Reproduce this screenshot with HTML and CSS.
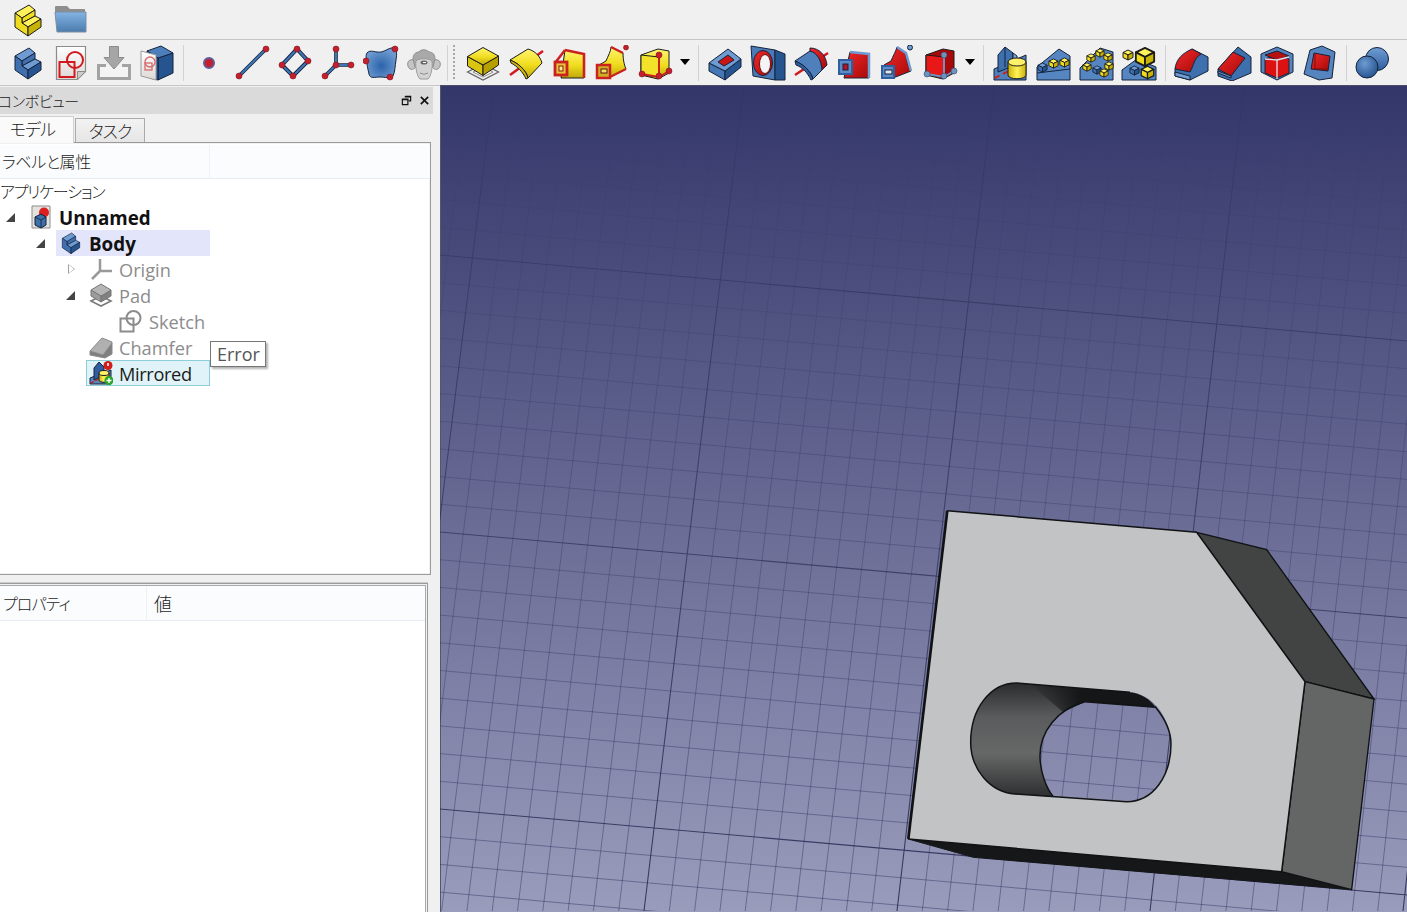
FILE: index.html
```html
<!DOCTYPE html>
<html lang="ja">
<head>
<meta charset="utf-8">
<title>FreeCAD</title>
<link rel="stylesheet" href="styles.css">
</head>
<body>
<svg class="sprite" xmlns="http://www.w3.org/2000/svg">
  <defs>
    <linearGradient id="gy" x1="0" y1="0" x2="0" y2="1"><stop offset="0" stop-color="#fff56e"/><stop offset=".55" stop-color="#f0dc1e"/><stop offset="1" stop-color="#bfa80a"/></linearGradient>
    <linearGradient id="gr" x1="0" y1="0" x2="1" y2="1"><stop offset="0" stop-color="#f02a2a"/><stop offset="1" stop-color="#a80808"/></linearGradient>
    <linearGradient id="gb" x1="0" y1="0" x2="0" y2="1"><stop offset="0" stop-color="#6f9dd3"/><stop offset="1" stop-color="#2f5f9e"/></linearGradient>
    <linearGradient id="gfold" x1="0" y1="0" x2="0" y2="1"><stop offset="0" stop-color="#84b4e4"/><stop offset="1" stop-color="#4c7cae"/></linearGradient>
    <radialGradient id="gface" cx=".5" cy=".6" r=".55"><stop offset="0" stop-color="#2b63aa"/><stop offset="1" stop-color="#6c9ad0"/></radialGradient>
    <radialGradient id="gball" cx=".4" cy=".35" r=".7"><stop offset="0" stop-color="#6d9bd2"/><stop offset="1" stop-color="#24508c"/></radialGradient>
    <linearGradient id="gpage" x1="0" y1="0" x2="0" y2="1"><stop offset="0" stop-color="#fff"/><stop offset="1" stop-color="#dcd8d4"/></linearGradient>
    <linearGradient id="gcyl" x1="0" y1="0" x2="1" y2="0"><stop offset="0" stop-color="#c9b206"/><stop offset=".5" stop-color="#fff25a"/><stop offset="1" stop-color="#c9b206"/></linearGradient>
    <linearGradient id="wall" x1="0" y1="0" x2="0" y2="1"><stop offset="0" stop-color="#2b2c2d"/><stop offset=".3" stop-color="#5a5b5c"/><stop offset=".62" stop-color="#666767"/><stop offset="1" stop-color="#2d2e2f"/></linearGradient>
    <linearGradient id="walltop" x1="0" y1="0" x2="1" y2="0"><stop offset="0" stop-color="#141618" stop-opacity="0"/><stop offset=".4" stop-color="#141618"/><stop offset="1" stop-color="#141618"/></linearGradient>
    <linearGradient id="gmin" gradientUnits="userSpaceOnUse" x1="0" y1="86" x2="0" y2="912"><stop offset="0" stop-color="#2a2d5c" stop-opacity="0"/><stop offset=".1" stop-color="#2a2d5c" stop-opacity=".08"/><stop offset=".4" stop-color="#2a2d5c" stop-opacity=".28"/><stop offset="1" stop-color="#2a2d5c" stop-opacity=".46"/></linearGradient>
    <linearGradient id="gmaj" gradientUnits="userSpaceOnUse" x1="0" y1="86" x2="0" y2="912"><stop offset="0" stop-color="#24264f" stop-opacity=".1"/><stop offset=".3" stop-color="#24264f" stop-opacity=".5"/><stop offset="1" stop-color="#24264f" stop-opacity=".85"/></linearGradient>

    <symbol id="step" viewBox="0 0 36 36">
      <path class="ft ol" d="M5 11 19 3l6 5-13 8z"/>
      <path class="ff ol" d="M12 16 25 8v6l-13 7z"/>
      <path class="ft ol" d="M12 21 25 14l6 3-13 8z"/>
      <path class="ff ol" d="M5 11l7 5v5l6 4v9L5 25z"/>
      <path class="fd ol" d="M18 25l13-8v8l-13 9z"/>
    </symbol>
    <symbol id="cube" viewBox="0 0 12 12">
      <path class="ft ol" d="M1 3.500 6 1l5 2.500L6 6z"/>
      <path class="ff ol" d="M1 3.500 6 6v5L1 8.500z"/>
      <path class="fd ol" d="M6 6l5-2.500v5L6 11z"/>
    </symbol>
    <symbol id="part-sketch" viewBox="0 0 36 36">
      <path d="M3.500 1.500h29v25l-8 8h-21z" fill="url(#gpage)" stroke="#8b8b8b" stroke-width="1.200"/>
      <path d="M32.500 26.500l-8 8v-8z" fill="#cfcac6" stroke="#8b8b8b"/>
      <rect x="6.500" y="17" width="15" height="15" fill="none" stroke="#d01a1f" stroke-width="2"/>
      <circle cx="22" cy="15" r="8" fill="none" stroke="#d01a1f" stroke-width="2"/>
    </symbol>
    <symbol id="import" viewBox="0 0 36 36">
      <path d="M10 20.500H2.500v13h31v-13H26" fill="#f4f4f4" stroke="#a3a3a3" stroke-width="3"/>
      <path d="M13.500 1.500h9v11H28L18 24 8 12.500h5.500z" fill="#a6a6a6" stroke="#8c8c8c"/>
    </symbol>
    <symbol id="sketch-cube" viewBox="0 0 36 36">
      <path d="M19 13 34 8v20l-15 7z" fill="#25548f" stroke="#14233c"/>
      <path d="M8 6 22 1l12 7-15 5z" fill="#4d7fbc" stroke="#14233c"/>
      <path d="M8 6l11 7v22l-8-2z" fill="#2f5f9e" stroke="#14233c"/>
      <path d="M2 6l15 4v25L2 31z" fill="url(#gpage)" stroke="#9a9a9a"/>
      <rect x="6" y="18" width="7" height="7" fill="none" stroke="#d9686a" stroke-width="1.300"/>
      <circle cx="11" cy="17" r="5" fill="none" stroke="#d9686a" stroke-width="1.300"/>
    </symbol>
    <symbol id="point" viewBox="0 0 36 36"><circle cx="18" cy="18" r="5" fill="#c51f2d" stroke="#5d5d99" stroke-width="2"/></symbol>
    <symbol id="line" viewBox="0 0 36 36">
      <path d="M5 31 32 4" stroke="#14233c" stroke-width="3.600"/>
      <path d="M5 31 32 4" stroke="#3f75b5" stroke-width="2"/>
      <circle cx="5" cy="31" r="3" class="rd"/><circle cx="32" cy="4" r="3" class="rd"/>
    </symbol>
    <symbol id="rectdatum" viewBox="0 0 36 36">
      <path d="M20 4 31 16 16 31 5 20z" fill="none" stroke="#14233c" stroke-width="4"/>
      <path d="M20 4 31 16 16 31 5 20z" fill="none" stroke="#3f75b5" stroke-width="2.200"/>
      <circle cx="20" cy="4" r="3" class="rd"/><circle cx="31" cy="16" r="3" class="rd"/><circle cx="16" cy="31" r="3" class="rd"/><circle cx="5" cy="20" r="3" class="rd"/>
    </symbol>
    <symbol id="axes" viewBox="0 0 36 36">
      <path d="M16 4v16h16M16 20 5 31" fill="none" stroke="#14233c" stroke-width="3.600"/>
      <path d="M16 4v16h16M16 20 5 31" fill="none" stroke="#3f75b5" stroke-width="2"/>
      <circle cx="16" cy="4" r="3" class="rd"/><circle cx="16" cy="20" r="3" class="rd"/><circle cx="31" cy="20" r="3" class="rd"/><circle cx="5" cy="31" r="3" class="rd"/>
    </symbol>
    <symbol id="face" viewBox="0 0 36 36">
      <path d="M4 8c3-4 9 0 14-1 5-1 9-5 13-4 3 1 3 6 2 12-1 6-1 12-3 16-3 3-8 1-13 1-5 0-10 2-11-3-1-5-2-8-2-11 0-3-2-7 0-10z" fill="url(#gface)" stroke="#14233c"/>
      <circle cx="32" cy="4" r="3" class="rd"/><circle cx="3" cy="16" r="3" class="rd"/><circle cx="27" cy="32" r="3" class="rd"/>
    </symbol>
    <symbol id="sheep" viewBox="0 0 36 36">
      <path d="M8 15C1 13 0 21 4 24c2 1 5 0 6-3zM28 15c7-2 8 6 4 9-2 1-5 0-6-3z" fill="#c4c4c4" stroke="#8f8f8f"/>
      <path d="M7 14c0-5 3-7 6-7 2-3 7-3 10 0 4 0 6 3 6 7l-2 8H9z" fill="#a9a9a9" stroke="#8f8f8f"/>
      <path d="M10 16c2-3 14-3 16 0 1 6-1 15-4 18h-8c-3-3-5-12-4-18z" fill="#d3d3d3" stroke="#9a9a9a"/>
      <ellipse cx="18" cy="17.500" rx="3.500" ry="2" fill="#6a6a6a"/>
      <path d="M17 17.500h3" stroke="#fff" stroke-width="1"/>
      <path d="M14 28q4 2.500 8 0" fill="none" stroke="#8c8c8c"/>
    </symbol>
    <symbol id="pad" viewBox="0 0 36 36">
      <path d="M2.500 27 18 19l15.500 8L18 35z" fill="#eee" stroke="#666" stroke-width="1.300"/>
      <path d="M8 27l10-5 10 5-10 5z" fill="#fff" stroke="#8a8a8a"/>
      <path d="M2.500 11.500V21L18 30.500V20z" fill="#d9c40f" stroke="#1c1c1c"/>
      <path d="M33.500 11v9L18 30.500V20z" fill="#b79f00" stroke="#1c1c1c"/>
      <path d="M2.500 11.500 18 2.500 33.500 11 18 20z" fill="url(#gy)" stroke="#1c1c1c"/>
    </symbol>
    <symbol id="revolve" viewBox="0 0 36 36">
      <path d="M2 30 35 6" stroke="#d01a1f" stroke-width="2.500"/>
      <path d="M2 15 20 4C27 6 32 11 34 18L20 33C18 25 10 18 2 15z" fill="url(#gy)" stroke="#1c1c1c"/>
      <path d="M2 15C10 18 18 25 20 33L18 34C15 27 9 21 3 18z" fill="#cdb70a" stroke="#1c1c1c"/>
    </symbol>
    <symbol id="loft" viewBox="0 0 36 36">
      <path d="M14 5 33 9v24H10z" fill="url(#gy)" stroke="#1c1c1c"/>
      <path d="M14 5 33 9v24" fill="none" stroke="#c9221f" stroke-width="2.600"/>
      <path d="M4 18 14 5" stroke="#c9221f" stroke-width="2.500"/>
      <rect x="4" y="17" width="12" height="13" fill="#e8c33a" stroke="#c9221f" stroke-width="2.800"/>
      <rect x="8" y="21" width="4" height="5" fill="#f7ee8a" stroke="#8c1a12"/>
    </symbol>
    <symbol id="pipe" viewBox="0 0 36 36">
      <path d="M12 16C14 11 17 6 17 2l12 6c0 8 2 14 3 16L14 33H5V20z" fill="url(#gy)" stroke="#1c1c1c"/>
      <path d="M17 2l12 6" stroke="#c9221f" stroke-width="2.500"/>
      <path d="M14 33 32 24" stroke="#c9221f" stroke-width="2"/>
      <circle cx="32" cy="2.500" r="2.500" class="rd"/>
      <rect x="3" y="20" width="13" height="13" fill="#cfae24" stroke="#c9221f" stroke-width="2.500"/>
      <rect x="7" y="24" width="6" height="4" fill="#f0e26a" stroke="#611"/>
    </symbol>
    <symbol id="prim-y" viewBox="0 0 36 36">
      <path d="M4 10 21 4l11 2v22l-11 6-17-4z" fill="url(#gy)" stroke="#1c1c1c"/>
      <path d="M4 10 22 12v20L4 30z" fill="#f3e22a" stroke="#1c1c1c"/>
      <path d="M22 12v20M5 29l17 3 10-6" fill="none" stroke="#c9221f" stroke-width="2"/>
      <circle cx="22" cy="10" r="3" class="rd"/><circle cx="22" cy="31" r="3" class="rd"/><circle cx="5" cy="29" r="3" class="rd"/><circle cx="32" cy="26" r="3" class="rd"/>
    </symbol>
    <symbol id="pocket" viewBox="0 0 36 36">
      <path d="M2 18v8l16 9V26z" fill="#4577b4" stroke="#14233c"/>
      <path d="M34 14v8L18 35V26z" fill="#25548f" stroke="#14233c"/>
      <path d="M2 18 21 4l13 10L18 26z" fill="#6e9bd1" stroke="#14233c"/>
      <path d="M11 17 21 10l6 5-10 6z" fill="#cc1414" stroke="#14233c"/>
    </symbol>
    <symbol id="hole" viewBox="0 0 36 36">
      <path d="M1 1l24 4v30L3 31z" fill="#4a7bb7" stroke="#14233c"/>
      <path d="M25 5l10 4v26H25z" fill="#25548f" stroke="#14233c"/>
      <ellipse cx="13" cy="18" rx="9.500" ry="12.500" fill="url(#gr)" stroke="#14233c"/>
      <ellipse cx="15" cy="19" rx="5.500" ry="9.500" fill="#f4f4f4" stroke="#6e1010"/>
    </symbol>
    <symbol id="groove" viewBox="0 0 36 36">
      <path d="M2 30 35 8" stroke="#d01a1f" stroke-width="2.500"/>
      <path d="M17 3C26 3 33 10 34 20L29 25C28 15 24 9 17 7z" fill="url(#gr)" stroke="#14233c"/>
      <path d="M2 16 17 6C24 8 28 14 29 25L20 34C18 26 10 19 2 16z" fill="#4f80bc" stroke="#14233c"/>
      <path d="M2 16C10 19 18 26 20 34L18 35C15 28 9 22 3 20z" fill="#2f5f9e" stroke="#14233c"/>
    </symbol>
    <symbol id="subloft" viewBox="0 0 36 36">
      <path d="M14 7 33 9v24H8z" fill="url(#gr)" stroke="#14233c"/>
      <path d="M14 7 33 9v24" fill="none" stroke="#6e9bd1" stroke-width="2.500"/>
      <rect x="3" y="15" width="13" height="14" fill="#5e8cc6" stroke="#2f5f9e" stroke-width="2"/>
      <rect x="7" y="19" width="5" height="6" fill="#b6132a" stroke="#14233c"/>
    </symbol>
    <symbol id="subpipe" viewBox="0 0 36 36">
      <path d="M12 16C14 11 17 6 18 2l9 6c0 8 3 14 5 18L14 33H5V20z" fill="url(#gr)" stroke="#14233c"/>
      <path d="M18 2l9 6 5 18" fill="none" stroke="#6e9bd1" stroke-width="2.500"/>
      <circle cx="31" cy="2.500" r="2.500" fill="#6e9bd1" stroke="#14233c"/>
      <rect x="3" y="21" width="12" height="12" fill="#5e8cc6" stroke="#2f5f9e" stroke-width="2"/>
      <rect x="6" y="25" width="7" height="4" fill="#dfe9f4" stroke="#14233c"/>
    </symbol>
    <symbol id="prim-r" viewBox="0 0 36 36">
      <path d="M4 10 21 4l11 2v22l-11 6-17-4z" fill="#a80808" stroke="#1c1c1c"/>
      <path d="M4 10 22 12v20L4 30z" fill="#e81818" stroke="#1c1c1c"/>
      <path d="M22 12v20M5 29l17 3 10-6" fill="none" stroke="#6e92bd" stroke-width="2"/>
      <circle cx="22" cy="10" r="3" class="bd"/><circle cx="22" cy="31" r="3" class="bd"/><circle cx="5" cy="29" r="3" class="bd"/><circle cx="32" cy="26" r="3" class="bd"/>
    </symbol>
    <symbol id="mirror" viewBox="0 0 36 36">
      <path d="M2 24 34 10v25H2z" fill="#4f80bc" stroke="#14233c"/>
      <path d="M6 10 13 2l8 6v13L6 27z" fill="#3e70ad" stroke="#14233c"/>
      <path d="M13 2v20" stroke="#14233c"/>
      <path d="M21 8l4 3v6l-4 3z" fill="#7ba6d8" stroke="#14233c"/>
      <path d="M3 33 34 17" stroke="#c9221f" stroke-width="2" stroke-dasharray="5 4"/>
      <path d="M16 17v13c0 5 18 5 18 0V17z" fill="url(#gcyl)" stroke="#1c1c1c"/>
      <ellipse cx="25" cy="17" rx="9" ry="4" fill="#fff26a" stroke="#1c1c1c"/>
    </symbol>
    <symbol id="linear" viewBox="0 0 36 36">
      <path d="M2 22 24 4l11 7v24H2z" fill="#5686c1" stroke="#14233c"/>
      <path d="M2 28 35 24" stroke="#14233c"/>
      <use href="#cube" class="blue" x="2" y="17" width="11" height="11"/>
      <use href="#cube" class="yellow" x="13" y="13" width="11" height="11"/>
      <use href="#cube" class="yellow" x="24" y="12" width="11" height="11"/>
    </symbol>
    <symbol id="polar" viewBox="0 0 36 36">
      <path d="M2 23 22 3l13 4v28H2z" fill="#5686c1" stroke="#14233c"/>
      <use href="#cube" class="yellow" x="17" y="3" width="10" height="10"/>
      <use href="#cube" class="yellow" x="25" y="7" width="10" height="10"/>
      <use href="#cube" class="yellow" x="26" y="16" width="10" height="10"/>
      <use href="#cube" class="yellow" x="8" y="8" width="10" height="10"/>
      <use href="#cube" class="yellow" x="4" y="17" width="10" height="10"/>
      <use href="#cube" class="blue" x="14" y="20" width="10" height="10"/>
      <use href="#cube" class="yellow" x="21" y="23" width="10" height="10"/>
    </symbol>
    <symbol id="multi" viewBox="0 0 36 36">
      <path d="M1 25 16 14l19 8v13H1z" fill="#5686c1" stroke="#14233c"/>
      <use href="#cube" class="yellow" x="1" y="4" width="12" height="12"/>
      <use href="#cube" class="yellow" x="13" y="1" width="22" height="22"/>
      <use href="#cube" class="blue" x="8" y="20" width="11" height="11"/>
      <use href="#cube" class="yellow" x="19" y="20" width="15" height="15"/>
    </symbol>
    <symbol id="fillet" viewBox="0 0 36 36">
      <path d="M2 24v7l15 4 18-9V12L19 4z" fill="#3e70ad" stroke="#14233c"/>
      <path d="M2 27l15 4v4L2 31z" fill="#6e9bd1" stroke="#14233c"/>
      <path d="M2 24C3 14 10 8 19 4L28 9C21 13 21 20 17 27z" fill="url(#gr)" stroke="#14233c"/>
    </symbol>
    <symbol id="chamfer" viewBox="0 0 36 36">
      <path d="M2 24v7l14 5 19-8V12L22 2z" fill="#3e70ad" stroke="#14233c"/>
      <path d="M2 24 17 7l12 6-14 18z" fill="url(#gr)" stroke="#14233c"/>
      <path d="M2 28l13 5v-2L2 26z" fill="#6e9bd1" stroke="#14233c"/>
    </symbol>
    <symbol id="draft" viewBox="0 0 36 36">
      <path d="M2 9 18 2l16 7v18l-16 8-16-8z" fill="#5584bf" stroke="#14233c"/>
      <path d="M6 14 18 10l12 4v14l-12 5-12-5z" fill="#dc1212" stroke="#14233c"/>
      <path d="M6 10 18 6l12 5-12 4z" fill="#b81010" stroke="#14233c"/>
      <path d="M18 15v19M6 14l12 1 12-3" fill="none" stroke="#dfe6ee" stroke-width="1.300"/>
    </symbol>
    <symbol id="thickness" viewBox="0 0 36 36">
      <path d="M8 5 20 1l13 6-3 26-13 2-15-6z" fill="#5584bf" stroke="#14233c"/>
      <path d="M12 8 28 11l-2 15-17-2z" fill="url(#gr)" stroke="#14233c"/>
      <path d="M13 9v15h13" fill="none" stroke="#7d0d0d"/>
    </symbol>
    <symbol id="boolean" viewBox="0 0 36 36">
      <circle cx="23" cy="14" r="11.500" fill="url(#gb)" stroke="#14233c"/>
      <circle cx="13" cy="22" r="11" fill="url(#gball)" stroke="#14233c"/>
    </symbol>
    <symbol id="doc" viewBox="0 0 24 24">
      <path d="M3 1h18v22H3z" fill="#e4e2df" stroke="#8d8d8d"/>
      <circle cx="15" cy="7.500" r="5" fill="#dc1f1f"/>
      <path d="M6 12 12 9l5 3v8l-5 3-6-3z" fill="#3d6fa8" stroke="#14233c"/>
      <path d="M6 12l6 3 5-3M12 15v8" fill="none" stroke="#14233c" stroke-width=".8"/>
    </symbol>
    <symbol id="t-origin" viewBox="0 0 24 24">
      <path d="M11 2v12h12M11 14 3 22" fill="none" stroke="#999" stroke-width="2.500"/>
    </symbol>
    <symbol id="t-pad" viewBox="0 0 24 24">
      <path d="M2 18l10-5 10 5-10 5z" fill="#fff" stroke="#7a7a7a" stroke-width="1.600"/>
      <path d="M2 7v6l10 6V13z" fill="#9c9c9c" stroke="#777"/>
      <path d="M22 7v6l-10 6V13z" fill="#808080" stroke="#777"/>
      <path d="M2 7 12 1l10 6-10 6z" fill="#b5b5b5" stroke="#777"/>
    </symbol>
    <symbol id="t-sketch" viewBox="0 0 24 24">
      <rect x="1.500" y="9.500" width="13" height="13" fill="none" stroke="#8c8c8c" stroke-width="2"/>
      <circle cx="14.500" cy="9" r="7" fill="none" stroke="#8c8c8c" stroke-width="2"/>
    </symbol>
    <symbol id="t-chamfer" viewBox="0 0 24 24">
      <path d="M1 16v4l15 3 7-4V8z" fill="#7f7f7f" stroke="#8a8a8a"/>
      <path d="M1 16 13 3l10 4v1L14 20z" fill="#b0b0b0" stroke="#8a8a8a"/>
    </symbol>
    <symbol id="t-mirror" viewBox="0 0 24 24">
      <path d="M1 17 22 9v14H1z" fill="#5a84b8" stroke="#14233c"/>
      <path d="M5 7l5-6 5 5v8l-10 5z" fill="#2f5f9e" stroke="#14233c"/>
      <path d="M2 22 20 12" stroke="#c9221f" stroke-width="1.500" stroke-dasharray="3 2"/>
      <path d="M10 12v7c0 3 10 3 10 0v-7z" fill="url(#gcyl)" stroke="#1c1c1c"/>
      <ellipse cx="15" cy="12" rx="5" ry="2.500" fill="#fff26a" stroke="#1c1c1c"/>
      <circle cx="19" cy="4.500" r="4.500" fill="#d21c1c"/>
      <path d="M19 2v3" stroke="#fff" stroke-width="1.600"/>
      <circle cx="20" cy="19.500" r="4.500" fill="#2aa52a"/>
      <path d="M20 17v5M17.500 19.500h5" stroke="#fff" stroke-width="1.400"/>
    </symbol>
  </defs>
</svg>

<header class="bar bar-top">
  <button class="tool"><svg class="ic yellow"><use href="#step"/></svg></button>
  <button class="tool">
    <svg class="ic" viewBox="0 0 36 36">
      <path d="M2 5a1 1 0 0 1 1-1h11l3 3h15v5H2z" fill="#8e8e8e"/>
      <path d="M2 10h31v20H4z" fill="url(#gfold)" stroke="#7b8ea3"/>
    </svg>
  </button>
</header>

<nav class="bar bar-main">
  <button class="tool"><svg class="ic blue"><use href="#step"/></svg></button>
  <button class="tool"><svg class="ic"><use href="#part-sketch"/></svg></button>
  <button class="tool"><svg class="ic"><use href="#import"/></svg></button>
  <button class="tool"><svg class="ic"><use href="#sketch-cube"/></svg></button>
  <span class="sep"></span>
  <button class="tool"><svg class="ic"><use href="#point"/></svg></button>
  <button class="tool"><svg class="ic"><use href="#line"/></svg></button>
  <button class="tool"><svg class="ic"><use href="#rectdatum"/></svg></button>
  <button class="tool"><svg class="ic"><use href="#axes"/></svg></button>
  <button class="tool"><svg class="ic"><use href="#face"/></svg></button>
  <button class="tool"><svg class="ic"><use href="#sheep"/></svg></button>
  <span class="break"><i class="sepline"></i><i class="grip"></i></span>
  <button class="tool"><svg class="ic"><use href="#pad"/></svg></button>
  <button class="tool"><svg class="ic"><use href="#revolve"/></svg></button>
  <button class="tool"><svg class="ic"><use href="#loft"/></svg></button>
  <button class="tool"><svg class="ic"><use href="#pipe"/></svg></button>
  <button class="tool"><svg class="ic"><use href="#prim-y"/></svg></button>
  <span class="drop"></span>
  <span class="sep sep-wide"></span>
  <button class="tool"><svg class="ic"><use href="#pocket"/></svg></button>
  <button class="tool"><svg class="ic"><use href="#hole"/></svg></button>
  <button class="tool"><svg class="ic"><use href="#groove"/></svg></button>
  <button class="tool"><svg class="ic"><use href="#subloft"/></svg></button>
  <button class="tool"><svg class="ic"><use href="#subpipe"/></svg></button>
  <button class="tool"><svg class="ic"><use href="#prim-r"/></svg></button>
  <span class="drop"></span>
  <span class="sep sep-wide"></span>
  <button class="tool"><svg class="ic"><use href="#mirror"/></svg></button>
  <button class="tool"><svg class="ic"><use href="#linear"/></svg></button>
  <button class="tool"><svg class="ic"><use href="#polar"/></svg></button>
  <button class="tool"><svg class="ic"><use href="#multi"/></svg></button>
  <span class="sep"></span>
  <button class="tool"><svg class="ic"><use href="#fillet"/></svg></button>
  <button class="tool"><svg class="ic"><use href="#chamfer"/></svg></button>
  <button class="tool"><svg class="ic"><use href="#draft"/></svg></button>
  <button class="tool"><svg class="ic"><use href="#thickness"/></svg></button>
  <span class="sep"></span>
  <button class="tool"><svg class="ic"><use href="#boolean"/></svg></button>
</nav>

<main class="work">
  <aside class="dock">
    <div class="dock-title">
      <span class="jp dock-label">コンボビュー</span>
      <svg class="dock-btn" viewBox="0 0 12 12"><path d="M4.500 1.500h6v5h-2M1.500 4.500h6v6h-6z" fill="none" stroke="#111" stroke-width="1.300"/><path d="M4 2h7M1 5h7" stroke="#111" stroke-width="1.400"/></svg>
      <svg class="dock-btn" viewBox="0 0 12 12"><path d="M2 2l8 8M10 2l-8 8" stroke="#111" stroke-width="1.800"/></svg>
    </div>
    <div class="tabs">
      <span class="tab tab-on jp">モデル</span>
      <span class="tab jp">タスク</span>
    </div>
    <section class="frame frame-tree">
      <div class="hdr hdr-tree"><span class="jp hdr-a">ラベルと属性</span><span class="hdr-b"></span></div>
      <div class="jp tree-root">アプリケーション</div>
      <div class="row l0"><i class="caret open"></i><span class="item bold"><svg class="tic"><use href="#doc"/></svg>Unnamed</span></div>
      <div class="row l1"><i class="caret open"></i><span class="item bold hi"><svg class="tic" viewBox="0 0 36 36"><use href="#step" class="blue"/></svg>Body</span></div>
      <div class="row l2"><i class="caret closed"></i><span class="item dim"><svg class="tic"><use href="#t-origin"/></svg>Origin</span></div>
      <div class="row l2"><i class="caret open"></i><span class="item dim"><svg class="tic"><use href="#t-pad"/></svg>Pad</span></div>
      <div class="row l3"><i class="caret none"></i><span class="item dim"><svg class="tic"><use href="#t-sketch"/></svg>Sketch</span></div>
      <div class="row l2"><i class="caret none"></i><span class="item dim"><svg class="tic"><use href="#t-chamfer"/></svg>Chamfer</span></div>
      <div class="row l2"><i class="caret none"></i><span class="item sel"><svg class="tic"><use href="#t-mirror"/></svg>Mirrored</span></div>
      <div class="tooltip">Error</div>
    </section>
    <section class="frame frame-prop">
      <div class="hdr hdr-prop"><span class="jp hdr-p">プロパティ</span><span class="jp hdr-v">値</span></div>
    </section>
  </aside>

  <div class="view">
    <svg class="scene" viewBox="440 86 967 826" xmlns="http://www.w3.org/2000/svg">
      <path class="grid-min" d="M444 86 340.4 912M469 86 365.700 912M519 86 416.300 912M544 86 441.600 912M569 86 466.900 912M594 86 492.200 912M619 86 517.500 912M644 86 542.800 912M669 86 568.100 912M694 86 593.400 912M719 86 618.700 912M769 86 669.300 912M794 86 694.600 912M819 86 719.900 912M844 86 745.200 912M869 86 770.500 912M894 86 795.800 912M919 86 821.100 912M944 86 846.400 912M969 86 871.700 912M1019 86 922.300 912M1044 86 947.600 912M1069 86 972.900 912M1094 86 998.200 912M1119 86 1023.500 912M1144 86 1048.800 912M1169 86 1074.100 912M1194 86 1099.400 912M1219 86 1124.700 912M1269 86 1175.300 912M1294 86 1200.600 912M1319 86 1225.900 912M1344 86 1251.200 912M1369 86 1276.500 912M1394 86 1301.800 912M1419 86 1327.100 912M1444 86 1352.400 912M1469 86 1377.700 912"/>
      <path class="grid-min" d="M440 6.700l967 86M440 34.400l967 86M440 62.100l967 86M440 89.800l967 86M440 117.500l967 86M440 145.200l967 86M440 172.900l967 86M440 200.600l967 86M440 228.300l967 86M440 283.700l967 86M440 311.400l967 86M440 339.100l967 86M440 366.800l967 86M440 394.500l967 86M440 422.200l967 86M440 449.900l967 86M440 477.600l967 86M440 505.300l967 86M440 560.700l967 86M440 588.400l967 86M440 616.100l967 86M440 643.800l967 86M440 671.500l967 86M440 699.200l967 86M440 726.900l967 86M440 754.600l967 86M440 782.300l967 86M440 837.700l967 86M440 865.400l967 86M440 893.100l967 86"/>
      <path class="grid-maj" d="M494 86 391 912M744 86 644 912M994 86 897 912M1244 86 1150 912M1494 86 1403 912M440 256l967 86M440 533l967 86M440 810l967 86"/>
      <g transform="translate(890 500) scale(.33333)">
        <path d="M55 1020 1175 1118 1385 1172 250 1075z" fill="#151719" stroke="#151719" stroke-width="3"/>
        <path d="M920 100 1130 152 1452 600 1245 548z" fill="#424444" stroke="#101214" stroke-width="4"/>
        <path d="M1245 548 1452 600 1385 1172 1175 1118z" fill="#646665" stroke="#101214" stroke-width="4"/>
        <path d="M172 35 920 100 1245 548 1175 1118 55 1020zM380 552 720 580C790 585 843 660 843 735 843 830 790 908 710 908L375 885C300 880 242 810 242 730 242 630 300 552 380 552z" fill="#c2c3c4" fill-rule="evenodd"/>
        <path d="M380 552 585 570V608C500 630 450 700 450 770 450 820 470 870 490 893L375 885C300 880 242 810 242 730 242 630 300 552 380 552z" fill="url(#wall)"/>
        <path d="M420 556 720 580C750 583 780 600 797 625L585 608 520 640z" fill="url(#walltop)"/>
        <path d="M585 608C500 630 450 700 450 770 450 820 470 870 490 893" fill="none" stroke="#111315" stroke-width="4.500"/>
        <path d="M585 608 797 625C825 660 843 700 843 735 843 830 790 908 710 908L375 885C300 880 242 810 242 730 242 630 300 552 380 552L720 580" fill="none" stroke="#111315" stroke-width="4.500"/>
        <path d="M172 35 920 100M920 100 1245 548 1175 1118 55 1020" fill="none" stroke="#101214" stroke-width="4.500"/>
        <path d="M172 35 55 1020" fill="none" stroke="#101214" stroke-width="8"/>
      </g>
    </svg>
  </div>
</main>
</body>
</html>
```
FILE: styles.css
```css
* { box-sizing: border-box; }
html, body { margin: 0; height: 100%; }
body {
  width: 1407px;
  height: 912px;
  overflow: hidden;
  background: #f0f0f0;
  color: #1c1c1c;
  font-family: "Open Sans", "Noto Sans", sans-serif;
  font-size: 18px;
  display: flex;
  flex-direction: column;
}
.sprite { display: block; width: 0; height: 0; overflow: hidden; }
.blue { --t: #6e9bd1; --f: #3f70ad; --d: #25548f; --s: #14233c; }
.yellow { --t: #fff25a; --f: #f0dc1e; --d: #c9b206; --s: #1c1c1c; }
.ft { fill: var(--t); }
.ff { fill: var(--f); }
.fd { fill: var(--d); }
.ol { stroke: var(--s); stroke-width: 1; stroke-linejoin: round; }
.rd { fill: #c51f2d; stroke: #7c1620; stroke-width: .6; }
.bd { fill: #6e92bd; stroke: #2c4a70; stroke-width: .6; }

.bar { display: flex; align-items: center; flex: none; background: #f0f0f0; border-bottom: 1px solid #c6c6c6; }
.bar-top { height: 40px; padding-left: 6.500px; }
.bar-main { height: 46px; padding-left: 6.500px; }
.tool { flex: none; width: 43px; height: 38px; padding: 0; border: 0; background: none; display: flex; align-items: center; justify-content: center; }
.ic { width: 36px; height: 36px; display: block; }
.sep { flex: none; width: 9px; height: 36px; display: flex; justify-content: center; }
.sep::before { content: ""; width: 1px; background: #d2d2d2; }
.sep-wide { width: 11px; }
.break { flex: none; width: 16px; height: 36px; display: flex; padding-left: 1px; gap: 5px; }
.sepline { width: 1px; background: #d2d2d2; }
.grip { width: 2px; background: repeating-linear-gradient(#a8a8a8 0 2px, transparent 2px 4px); }
.drop { flex: none; width: 16px; height: 7px; position: relative; display: flex; justify-content: center; }
.drop::before { content: ""; width: 0; height: 0; border-left: 5.500px solid transparent; border-right: 5.500px solid transparent; border-top: 6px solid #000; }

.work { flex: 1; display: flex; min-height: 0; }
.dock { flex: none; width: 440px; display: flex; flex-direction: column; background: #f0f0f0; min-height: 0; padding-top: 1px; }
.jp {
  font-family: "Noto Sans CJK JP", "Open Sans", sans-serif;
  font-weight: 300;
  font-feature-settings: "palt";
  letter-spacing: -.4px;
}
.dock-title { height: 27px; width: 433px; background: #dadada; display: flex; align-items: center; padding-right: 3px; gap: 7px; flex: none; }
.dock-label { flex: 1; margin-left: -2px; font-size: 15px; color: #222; }
.dock-btn { width: 11px; height: 11px; flex: none; }
.tabs { display: flex; align-items: flex-end; height: 26px; flex: none; margin-top: 2px; width: 431px; }
.tab { height: 24px; width: 70px; margin-left: 1px; text-align: center; background: linear-gradient(#f2f2f2, #e6e6e6); border: 1px solid #aaa; border-bottom: 0; font-size: 17px; line-height: 23px; color: #222; letter-spacing: -1px; }
.tab-on { height: 27px; width: 79px; margin: 0 0 -1px -5px; padding-right: 3px; background: #fafafa; border-left: 0; border-color: #d0d0d0; line-height: 23px; z-index: 1; position: relative; }
.frame { position: relative; background: #fff; border: 1px solid #9a9a9a; margin-left: -2px; flex: none; }
.frame-tree { width: 433px; height: 433px; box-shadow: inset 0 0 0 1px #f0f0f0; }
.frame-prop { width: 432px; flex: 1; margin: 8px 0 -6px -4px; box-shadow: 0 0 0 1px #f0f0f0 inset, 0 -1px 0 #ccc; outline: 1px solid #aaa; outline-offset: -3px; }
.hdr { display: flex; background: #fbfcfd; border-bottom: 1px solid #e7edf3; }
.hdr-tree { height: 34px; margin-top: 2px; }
.hdr-prop { height: 35px; margin: 2px 2px 0; }
.hdr-a { width: 211px; padding-left: 3px; font-size: 16px; line-height: 32px; border-right: 1px solid #eef2f6; }
.hdr-p { width: 148px; padding-left: 4px; font-size: 16px; line-height: 35px; border-right: 1px solid #eef2f6; letter-spacing: -.9px; }
.hdr-v { padding-left: 7px; font-size: 18px; line-height: 35px; }
.tree-root { height: 26px; margin-top: -1px; padding-left: 1px; font-size: 16px; line-height: 26px; letter-spacing: -1.2px; }
.row { display: flex; width: 211px; height: 26px; align-items: center; font-size: 18.200px; white-space: nowrap; }
.l0 { padding-left: 1px; }
.l1 { padding-left: 31px; }
.l2 { padding-left: 61px; }
.l3 { padding-left: 91px; }
.caret { flex: none; width: 26px; height: 26px; display: flex; align-items: center; justify-content: center; padding-right: 5px; }
.caret.open::before { content: ""; width: 0; height: 0; border-style: solid; border-width: 0 0 9px 9px; border-color: transparent transparent #444 transparent; }
.caret.closed::before { content: ""; width: 0; height: 0; flex: none; border-style: solid; border-width: 5.500px 0 5.500px 7px; border-color: transparent transparent transparent #a0a0a0; }
.caret.closed::after { content: ""; width: 0; height: 0; flex: none; margin-left: -6px; border-style: solid; border-width: 4px 0 4px 5px; border-color: transparent transparent transparent #fff; }
.item { flex: 1; height: 26px; display: flex; align-items: center; padding: 2px 0 0 3px; gap: 6px; min-width: 0; }
.tic { width: 24px; height: 24px; flex: none; margin-top: -2px; }
.bold { font-weight: 700; font-size: 18.800px; color: #111; }
.dim { color: #8c8c8c; }
.hi { background: #e3e5fa; height: 26px; }
.sel { background: #dff3f8; border: 1px solid #8ccfd8; padding: 1px 0 0 2px; letter-spacing: -.35px; }
.tooltip {
  position: absolute;
  left: 211px;
  top: 198px;
  width: 56px;
  height: 26px;
  background: #fff;
  border: 1px solid #767676;
  box-shadow: 2px 2px 2px rgba(0, 0, 0, .3);
  color: #555;
  font-size: 18px;
  line-height: 24px;
  padding-left: 6px;
}
.view { flex: 1; min-width: 0; background: linear-gradient(#333669, #9a9cbc); border-left: 1px solid #55566a; border-top: 1px solid #4c4d63; margin-top: -1px; position: relative; }
.scene { display: block; width: 967px; height: 826px; position: absolute; left: -1px; top: -1px; }
.grid-min { fill: none; stroke: url(#gmin); stroke-width: 1; }
.grid-maj { fill: none; stroke: url(#gmaj); stroke-width: 1.100; }
```
